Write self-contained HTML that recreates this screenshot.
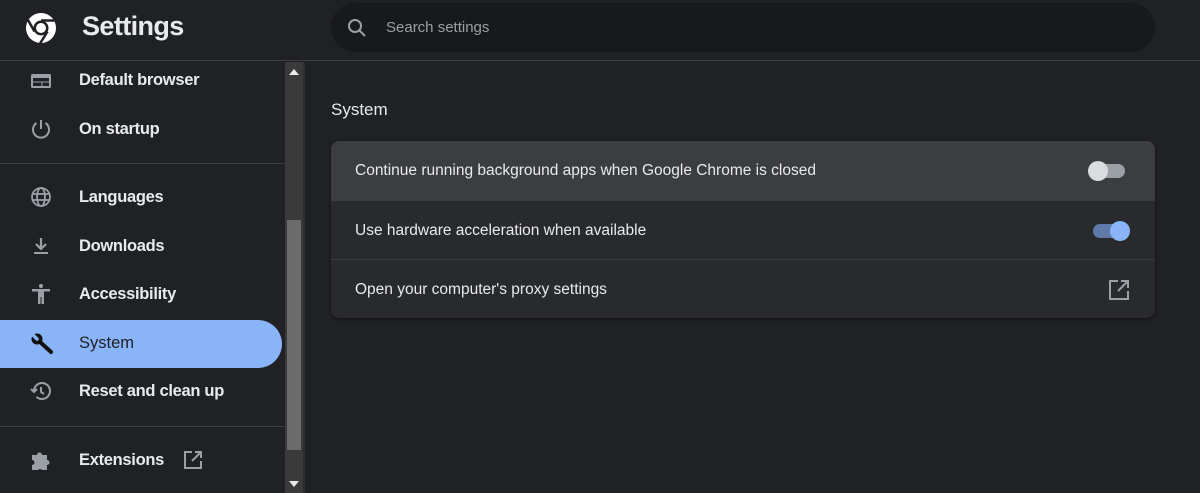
<!DOCTYPE html>
<html><head><style>
*{margin:0;padding:0;box-sizing:border-box}
body{width:1200px;height:493px;background:#202124;font-family:"Liberation Sans",sans-serif;overflow:hidden;position:relative;color:#e8eaed}
.hdr{position:absolute;left:0;top:0;width:1200px;height:61px;background:#202124;border-bottom:1px solid #3c3d40}
.title{position:absolute;left:82px;top:11px;font-size:27px;color:#e8eaed;font-weight:bold;letter-spacing:-0.6px}
.search{position:absolute;left:331px;top:3px;width:824px;height:49px;border-radius:25px;background:#18191b}
.search span{position:absolute;left:55px;top:16px;font-size:15px;color:#9aa0a6}
.side{position:absolute;left:0;top:62px;width:285px;height:431px;background:#202124}
.item{position:absolute;left:0;width:282px;height:48px;font-size:16.5px;font-weight:bold;color:#e8eaed;letter-spacing:-0.3px}
.item .t{position:absolute;left:79px;top:14px}
.item svg{position:absolute;left:30px;top:12px}
.sel{background:#8ab4f8;border-radius:0 24px 24px 0;color:#202124}
.sel .t{font-weight:normal;color:#202124;letter-spacing:0}
.div{position:absolute;left:0;width:285px;height:1px;background:#3c3d40}
.sb{position:absolute;left:285px;top:62px;width:18px;height:431px;background:#3a3a3a}
.thumb{position:absolute;left:287px;top:220px;width:14px;height:230px;background:#6b6b6b}
.vl{position:absolute;left:303px;top:62px;width:2px;height:431px;background:#2c2d30}
.h2{position:absolute;left:331px;top:100px;font-size:17px;color:#e8eaed}
.card{position:absolute;left:331px;top:141px;width:824px;height:177px;background:#292a2d;border-radius:8px;overflow:hidden;box-shadow:0 1px 3px rgba(0,0,0,.5)}
.row{position:absolute;left:0;width:824px;height:59px;font-size:15.5px;color:#e8eaed}
.row span{position:absolute;left:24px;top:21px}
.tg{position:absolute;width:36px;height:14px;border-radius:7px}
.kn{position:absolute;width:20px;height:20px;border-radius:50%}
</style></head><body>
<div class="hdr">
<svg style="position:absolute;left:25px;top:12px" width="32" height="32" viewBox="0 0 32 32"><circle cx="16" cy="16" r="15" fill="#fff"/><circle cx="16" cy="16" r="7.5" fill="#202124"/><circle cx="16" cy="16" r="5" fill="#fff"/><path d="M16 8.5 L29.5 8.5" stroke="#202124" stroke-width="2.5"/><path d="M9.5 19.5 L3 8" stroke="#202124" stroke-width="2.5"/><path d="M22.5 19.5 L15 31.5" stroke="#202124" stroke-width="2.5"/></svg>
<div class="title">Settings</div>
<div class="search"><svg style="position:absolute;left:16px;top:15px" width="20" height="20" viewBox="0 0 20 20"><circle cx="8" cy="8" r="6" fill="none" stroke="#9aa0a6" stroke-width="2"/><path d="M12.5 12.5 L18 18" stroke="#9aa0a6" stroke-width="2"/></svg><span>Search settings</span></div>
</div>
<div class="side">
<div class="item" style="top:-5px"><svg width="22" height="22" viewBox="0 0 22 22"><rect x="1" y="5" width="20" height="14" rx="1.5" fill="#9aa0a6"/><rect x="3" y="9" width="16" height="3.5" fill="#202124"/><rect x="3" y="13.5" width="8.5" height="3.5" fill="#202124"/><rect x="12.5" y="13.5" width="6.5" height="3.5" fill="#202124"/></svg><span class="t">Default browser</span></div>
<div class="item" style="top:44px"><svg width="22" height="22" viewBox="0 0 22 22"><path d="M11 2v9" stroke="#9aa0a6" stroke-width="2"/><path d="M6.5 5A8 8 0 1 0 15.5 5" fill="none" stroke="#9aa0a6" stroke-width="2"/></svg><span class="t">On startup</span></div>
<div class="div" style="top:101px"></div>
<div class="item" style="top:112px"><svg width="22" height="22" viewBox="0 0 22 22" fill="none" stroke="#9aa0a6" stroke-width="1.8"><circle cx="11" cy="11" r="9"/><ellipse cx="11" cy="11" rx="4" ry="9"/><path d="M2 8h18M2 14h18"/></svg><span class="t">Languages</span></div>
<div class="item" style="top:161px"><svg width="22" height="22" viewBox="0 0 22 22"><path d="M11 3v10M6 9l5 5 5-5" fill="none" stroke="#9aa0a6" stroke-width="2.2"/><rect x="4" y="17" width="14" height="2" fill="#9aa0a6"/></svg><span class="t">Downloads</span></div>
<div class="item" style="top:209px"><svg width="22" height="22" viewBox="0 0 22 22" fill="#9aa0a6"><circle cx="11" cy="3" r="2"/><rect x="2" y="6" width="18" height="2.5"/><rect x="8" y="8" width="6" height="6"/><rect x="8" y="13" width="2.5" height="8"/><rect x="11.5" y="13" width="2.5" height="8"/></svg><span class="t">Accessibility</span></div>
<div class="item sel" style="top:258px"><svg width="24" height="24" viewBox="0 0 24 24"><path d="M9 9 L21 20" stroke="#111" stroke-width="4" stroke-linecap="round"/><circle cx="7" cy="7" r="5.5" fill="#111"/><path d="M2 2 L7 7" stroke="#8ab4f8" stroke-width="3.5" stroke-linecap="round"/></svg><span class="t">System</span></div>
<div class="item" style="top:306px"><svg width="22" height="22" viewBox="0 0 22 22" fill="none" stroke="#9aa0a6" stroke-width="2"><path d="M4 11a8 8 0 1 1 2.5 5.8"/><path d="M1 9l3 3 3-3"/><path d="M11 7v5l3 2"/></svg><span class="t">Reset and clean up</span></div>
<div class="div" style="top:364px"></div>
<div class="item" style="top:375px"><svg width="22" height="22" viewBox="0 0 22 22"><path d="M2 6h5a2.5 2.5 0 0 1 5 0h5v5a2.5 2.5 0 0 1 0 5v5h-5a2.5 2.5 0 0 0-4 0H2v-5a2.5 2.5 0 0 0 0-5z" fill="#9aa0a6"/></svg><span class="t">Extensions</span><svg style="left:183px;top:13px" width="20" height="20" viewBox="0 0 20 20" fill="none" stroke="#9aa0a6" stroke-width="2"><path d="M9 2H2v16h16v-7"/><path d="M12 2h6v6M18 2L9 11"/></svg></div>
</div>
<div class="sb"></div><div class="thumb"></div>
<svg style="position:absolute;left:289px;top:69px" width="10" height="6"><path d="M0 6L5 0 10 6z" fill="#e8eaed"/></svg>
<svg style="position:absolute;left:289px;top:481px" width="10" height="6"><path d="M0 0L5 6 10 0z" fill="#e8eaed"/></svg>
<div class="vl"></div>
<div class="h2">System</div>
<div class="card">
<div class="row" style="top:0;background:#3c3d40"><span>Continue running background apps when Google Chrome is closed</span><div class="tg" style="left:758px;top:23px;background:#9aa0a6"></div><div class="kn" style="left:757px;top:20px;background:#dadce0"></div></div>
<div class="row" style="top:59px;border-top:1px solid #3c3d40"><span>Use hardware acceleration when available</span><div class="tg" style="left:762px;top:23px;background:#5f7aa8"></div><div class="kn" style="left:779px;top:20px;background:#8ab4f8"></div></div>
<div class="row" style="top:118px;border-top:1px solid #3c3d40"><span>Open your computer's proxy settings</span><svg style="position:absolute;left:778px;top:20px" width="20" height="20" viewBox="0 0 20 20" fill="none" stroke="#9aa0a6" stroke-width="2"><path d="M9 1H1v18h18v-8"/><path d="M12 1h7v7M19 1L9 11"/></svg></div>
</div>
</body></html>
